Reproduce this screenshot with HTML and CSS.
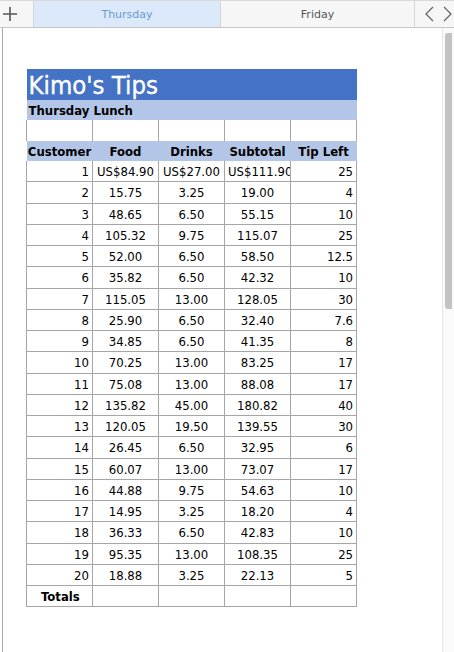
FILE: index.html
```html
<!DOCTYPE html>
<html>
<head>
<meta charset="utf-8">
<link rel="stylesheet" href="styles.css">
</head>
<body>
<div class="tabbar">
  <div class="add">
    <svg width="16" height="16" viewBox="0 0 16 16"><path d="M8 1v14M1 8h14" stroke="#555" stroke-width="1.6" fill="none"/></svg>
  </div>
  <div class="tab active">Thursday</div>
  <div class="tab">Friday</div>
  <div class="nav">
    <svg width="12" height="16" viewBox="0 0 12 16"><path d="M10 1L3 8l7 7" stroke="#666" stroke-width="1.3" fill="none"/></svg>
    <svg width="12" height="16" viewBox="0 0 12 16"><path d="M2 1l7 7-7 7" stroke="#666" stroke-width="1.3" fill="none"/></svg>
  </div>
</div>
<div class="main">
  <div class="sheet">
    <table class="grid">
      <colgroup><col><col><col><col><col></colgroup>
      <tr class="title"><td colspan="5">Kimo's Tips</td></tr>
      <tr class="sub"><td colspan="5">Thursday Lunch</td></tr>
      <tr class="blank"><td></td><td></td><td></td><td></td><td></td></tr>
      <tr class="head"><td>Customer</td><td>Food</td><td>Drinks</td><td>Subtotal</td><td>Tip Left</td></tr>
      <tr class="row"><td class="num">1</td><td class="amt">US$84.90</td><td class="amt">US$27.00</td><td class="amt">US$111.90</td><td class="num">25</td></tr>
      <tr class="row"><td class="num">2</td><td class="amt">15.75</td><td class="amt">3.25</td><td class="amt">19.00</td><td class="num">4</td></tr>
      <tr class="row"><td class="num">3</td><td class="amt">48.65</td><td class="amt">6.50</td><td class="amt">55.15</td><td class="num">10</td></tr>
      <tr class="row"><td class="num">4</td><td class="amt">105.32</td><td class="amt">9.75</td><td class="amt">115.07</td><td class="num">25</td></tr>
      <tr class="row"><td class="num">5</td><td class="amt">52.00</td><td class="amt">6.50</td><td class="amt">58.50</td><td class="num">12.5</td></tr>
      <tr class="row"><td class="num">6</td><td class="amt">35.82</td><td class="amt">6.50</td><td class="amt">42.32</td><td class="num">10</td></tr>
      <tr class="row"><td class="num">7</td><td class="amt">115.05</td><td class="amt">13.00</td><td class="amt">128.05</td><td class="num">30</td></tr>
      <tr class="row"><td class="num">8</td><td class="amt">25.90</td><td class="amt">6.50</td><td class="amt">32.40</td><td class="num">7.6</td></tr>
      <tr class="row"><td class="num">9</td><td class="amt">34.85</td><td class="amt">6.50</td><td class="amt">41.35</td><td class="num">8</td></tr>
      <tr class="row"><td class="num">10</td><td class="amt">70.25</td><td class="amt">13.00</td><td class="amt">83.25</td><td class="num">17</td></tr>
      <tr class="row"><td class="num">11</td><td class="amt">75.08</td><td class="amt">13.00</td><td class="amt">88.08</td><td class="num">17</td></tr>
      <tr class="row"><td class="num">12</td><td class="amt">135.82</td><td class="amt">45.00</td><td class="amt">180.82</td><td class="num">40</td></tr>
      <tr class="row"><td class="num">13</td><td class="amt">120.05</td><td class="amt">19.50</td><td class="amt">139.55</td><td class="num">30</td></tr>
      <tr class="row"><td class="num">14</td><td class="amt">26.45</td><td class="amt">6.50</td><td class="amt">32.95</td><td class="num">6</td></tr>
      <tr class="row"><td class="num">15</td><td class="amt">60.07</td><td class="amt">13.00</td><td class="amt">73.07</td><td class="num">17</td></tr>
      <tr class="row"><td class="num">16</td><td class="amt">44.88</td><td class="amt">9.75</td><td class="amt">54.63</td><td class="num">10</td></tr>
      <tr class="row"><td class="num">17</td><td class="amt">14.95</td><td class="amt">3.25</td><td class="amt">18.20</td><td class="num">4</td></tr>
      <tr class="row"><td class="num">18</td><td class="amt">36.33</td><td class="amt">6.50</td><td class="amt">42.83</td><td class="num">10</td></tr>
      <tr class="row"><td class="num">19</td><td class="amt">95.35</td><td class="amt">13.00</td><td class="amt">108.35</td><td class="num">25</td></tr>
      <tr class="row"><td class="num">20</td><td class="amt">18.88</td><td class="amt">3.25</td><td class="amt">22.13</td><td class="num">5</td></tr>
      <tr class="row totals"><td class="lbl">Totals</td><td></td><td></td><td></td><td></td></tr>
    </table>
  </div>
  <div class="scroll"><div class="thumb"></div></div>
</div>
</body>
</html>
```

FILE: styles.css
```css
html, body {
  margin: 0;
  padding: 0;
  background: #fff;
  width: 454px;
  height: 652px;
  overflow: hidden;
}
.tabbar {
  display: flex;
  height: 28px;
  background: #f6f6f6;
  border-top: 1px solid #d9d9d9;
  border-bottom: 1px solid #c6c6c6;
  box-sizing: border-box;
  font-family: "DejaVu Sans", sans-serif;
  font-size: 11px;
}
.add {
  width: 33px;
  display: flex;
  align-items: center;
  padding-left: 2px;
  box-sizing: border-box;
}
.tab {
  width: 193px;
  display: flex;
  align-items: center;
  justify-content: center;
  color: #555;
  border-right: 1px solid #d6d6d6;
}
.tab.active {
  width: 186px;
  background: #dce9fb;
  color: #6b9ad0;
  border-left: 1px solid #d6d6d6;
}
.nav {
  flex: 1;
  display: flex;
  align-items: center;
  justify-content: space-between;
  padding: 0 0 0 8px;
}
.main {
  display: flex;
  height: 624px;
}
.sheet {
  flex: 1;
  margin-left: 2px;
  border-left: 1px solid #a9a9a9;
  padding: 41px 0 0 23px;
}
.scroll {
  width: 9px;
  background: #fafafa;
  border-left: 1px solid #e6e6e6;
  padding: 5px 0 0 2px;
}
.thumb {
  width: 7px;
  height: 276px;
  background: #c2c2c2;
  border-radius: 3px 0 0 3px;
}
.grid {
  border-collapse: collapse;
  table-layout: fixed;
  width: 331px;
  font-family: "DejaVu Sans Condensed", "DejaVu Sans", sans-serif;
  font-size: 13px;
  color: #000;
}
.grid col { width: 66px; }
.grid td {
  padding: 0 3px;
  white-space: nowrap;
  overflow: hidden;
  line-height: 15px;
}
.title td {
  background: #4472c4;
  color: #fff;
  font-size: 25.5px;
  height: 29px;
  padding: 2px 2px 0;
  line-height: 29px;
  -webkit-text-stroke: 0.35px #fff;
}
.sub td {
  background: #b4c6e7;
  font-weight: bold;
  height: 19px;
  padding: 1px 2px 0;
}
.blank td {
  height: 21px;
  border-left: 1px solid #a6a6a6;
  border-right: 1px solid #a6a6a6;
}
.head td {
  background: #b4c6e7;
  font-weight: bold;
  text-align: center;
  height: 19px;
  padding: 1px 1px 0;
}
.row td {
  height: 19.25px;
  border: 1px solid #a6a6a6;
  padding-top: 1px;
}
.head + .row td { border-top: none; }
.num { text-align: right; }
.amt { text-align: center; }
.lbl { font-weight: bold; text-align: left; padding-left: 14px !important; }
```
